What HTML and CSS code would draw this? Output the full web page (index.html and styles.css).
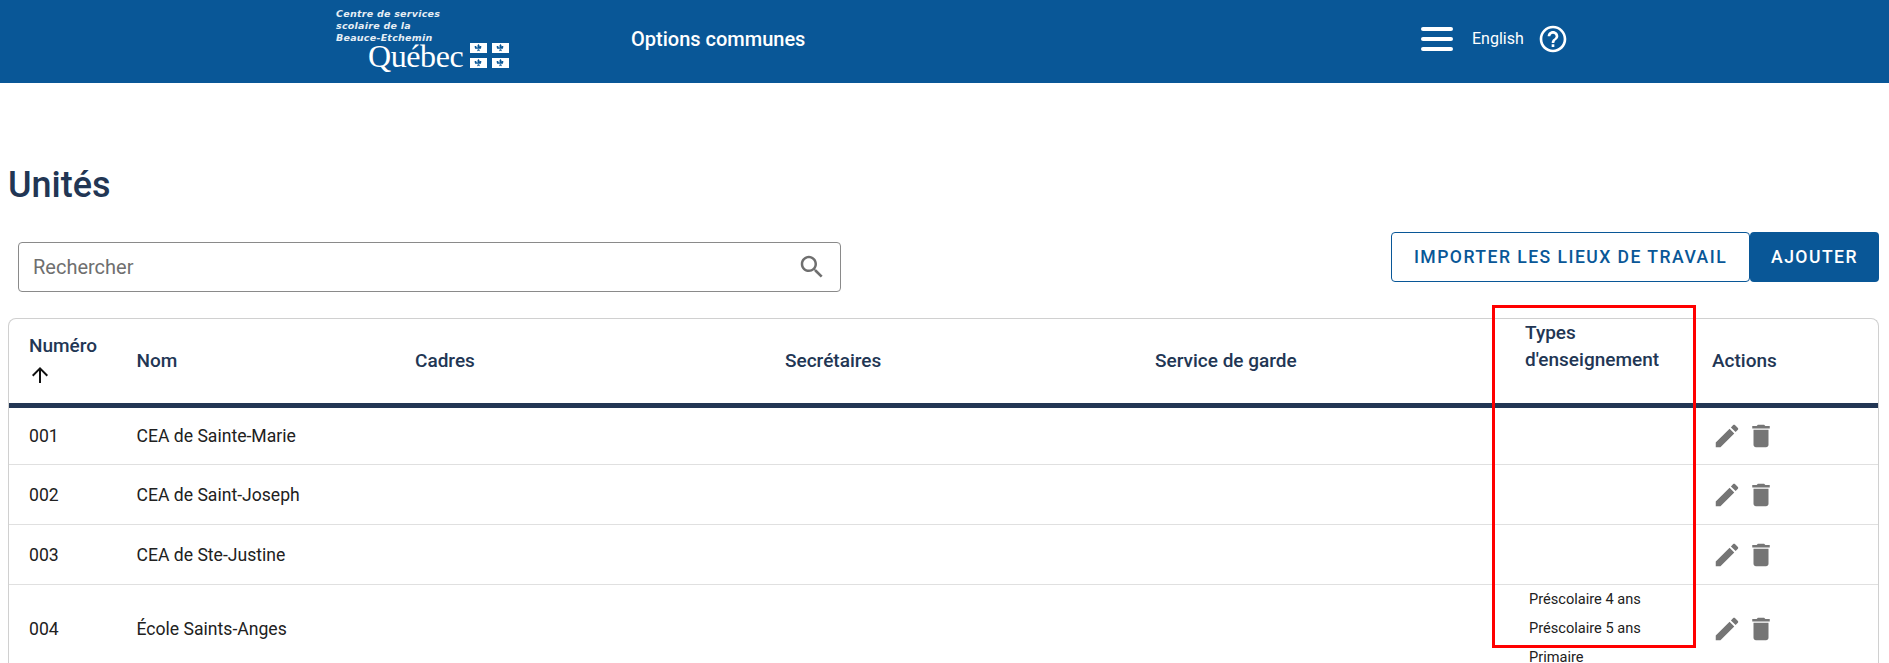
FILE: index.html
```html
<!DOCTYPE html>
<html lang="fr">
<head>
<meta charset="utf-8">
<title>Unités</title>
<link rel="stylesheet" href="styles.css">
</head>
<body>
<svg class="defs" width="0" height="0" aria-hidden="true">
  <symbol id="fleur" viewBox="0 0 17 10">
    <rect width="17" height="10" fill="#fff"/>
    <path d="M8.500 1c.9.800 1.300 1.700.8 3.400h-1.600C7.200 2.700 7.600 1.800 8.500 1zM6.700 4.400c-.1-1.200-1.200-1.700-1.900-1.100-.5.500-.3 1.300.4 1.400-.5.500-.1 1.200.6 1h4.400c.7.200 1.100-.5.600-1 .7-.1.900-.9.400-1.400-.7-.6-1.800-.1-1.900 1.100H6.700zM7.800 6.200h1.400l.6 1.800c-.4.300-.9.100-1.300-.4-.4.500-.9.700-1.300.4l.6-1.800z" fill="#095797"/>
  </symbol>
  <symbol id="pencil" viewBox="0 0 24 24"><path d="M3 17.250V21h3.750L17.810 9.940l-3.750-3.750L3 17.250zM20.710 7.040c.390-.390.390-1.020 0-1.410l-2.340-2.340c-.390-.390-1.020-.390-1.410 0l-1.830 1.830 3.750 3.750 1.830-1.830z"/></symbol>
  <symbol id="trash" viewBox="0 0 24 24"><path d="M6 19c0 1.100.900 2 2 2h8c1.100 0 2-.900 2-2V7H6v12zM19 4h-3.500l-1-1h-5l-1 1H5v2h14V4z"/></symbol>
  <symbol id="arrow" viewBox="0 0 24 24"><path d="M4 12l1.410 1.410L11 7.830V20h2V7.830l5.580 5.590L20 12l-8-8-8 8z"/></symbol>
</svg>

<header class="topbar">
  <div class="logo">
    <div class="logo-org">Centre de services<br>scolaire de la<br>Beauce-Etchemin</div>
    <div class="logo-row">
      <span class="logo-name">Québec</span>
      <span class="flag">
        <svg><use href="#fleur"/></svg><svg><use href="#fleur"/></svg><svg><use href="#fleur"/></svg><svg><use href="#fleur"/></svg>
      </span>
    </div>
  </div>
  <div class="app-name">Options communes</div>
  <div class="top-actions">
    <div class="burger"><span></span><span></span><span></span></div>
    <span class="lang">English</span>
    <svg class="help" viewBox="0 0 24 24"><path d="M11 18h2v-2h-2v2zm1-16C6.480 2 2 6.480 2 12s4.480 10 10 10 10-4.480 10-10S17.520 2 12 2zm0 18c-4.410 0-8-3.590-8-8s3.590-8 8-8 8 3.590 8 8-3.590 8-8 8zm0-14c-2.210 0-4 1.790-4 4h2c0-1.100.900-2 2-2s2 .900 2 2c0 2-3 1.750-3 5h2c0-2.250 3-2.500 3-5 0-2.210-1.790-4-4-4z"/></svg>
  </div>
</header>

<main class="content">
  <h1 class="title">Unités</h1>
  <div class="toolbar">
    <div class="search">
      <span class="search-text">Rechercher</span>
      <svg class="search-icon" viewBox="0 0 24 24"><path d="M15.500 14h-.790l-.280-.270C15.410 12.590 16 11.110 16 9.500 16 5.910 13.090 3 9.500 3S3 5.910 3 9.500 5.910 16 9.500 16c1.610 0 3.090-.590 4.230-1.570l.270.280v.790l5 4.990L20.490 19l-4.990-5zm-6 0C7.010 14 5 11.990 5 9.500S7.010 5 9.500 5 14 7.010 14 9.500 11.990 14 9.500 14z"/></svg>
    </div>
    <div class="buttons">
      <button class="btn btn-outline">IMPORTER LES LIEUX DE TRAVAIL</button>
      <button class="btn btn-solid">AJOUTER</button>
    </div>
  </div>

  <div class="card">
    <table class="units">
      <colgroup>
        <col class="c-num"><col class="c-name"><col class="c-wide"><col class="c-wide"><col class="c-wide"><col class="c-types"><col class="c-act">
      </colgroup>
      <thead>
        <tr>
          <th>Numéro<svg class="sort"><use href="#arrow"/></svg></th>
          <th>Nom</th>
          <th>Cadres</th>
          <th>Secrétaires</th>
          <th>Service de garde</th>
          <th>Types d'enseignement<svg class="sort sort-hidden"><use href="#arrow"/></svg></th>
          <th>Actions</th>
        </tr>
      </thead>
      <tbody>
        <tr class="row-first">
          <td>001</td><td>CEA de Sainte-Marie</td><td></td><td></td><td></td><td></td>
          <td class="acts"><svg class="act"><use href="#pencil"/></svg><svg class="act"><use href="#trash"/></svg></td>
        </tr>
        <tr class="row">
          <td>002</td><td>CEA de Saint-Joseph</td><td></td><td></td><td></td><td></td>
          <td class="acts"><svg class="act"><use href="#pencil"/></svg><svg class="act"><use href="#trash"/></svg></td>
        </tr>
        <tr class="row">
          <td>003</td><td>CEA de Ste-Justine</td><td></td><td></td><td></td><td></td>
          <td class="acts"><svg class="act"><use href="#pencil"/></svg><svg class="act"><use href="#trash"/></svg></td>
        </tr>
        <tr class="row-tall">
          <td>004</td><td>École Saints-Anges</td><td></td><td></td><td></td>
          <td class="types"><div>Préscolaire 4 ans</div><div>Préscolaire 5 ans</div><div>Primaire</div></td>
          <td class="acts"><svg class="act"><use href="#pencil"/></svg><svg class="act"><use href="#trash"/></svg></td>
        </tr>
      </tbody>
    </table>
  </div>
</main>
<div class="highlight"></div>
</body>
</html>
```

FILE: styles.css
```css
* { box-sizing: border-box; }
html, body { margin: 0; height: 100%; overflow: hidden; background: #fff; }
body { font-family: Roboto, "Liberation Sans", sans-serif; color: #223654; position: relative; }
.defs { position: absolute; }

.topbar { height: 83px; background: #095797; color: #fff; display: flex; align-items: center; padding: 0 320px 6px 336px; }
.logo { width: 295px; height: 83px; padding-top: 8px; flex: none; align-self: flex-start; }
.logo-org { font-family: "DejaVu Sans", sans-serif; font-weight: 700; font-style: italic; font-size: 9.500px; line-height: 12px; color: #e6eef5; letter-spacing: .25px; }
.logo-row { display: flex; align-items: center; margin: -9px 0 0 32px; }
.logo-name { font-family: "Liberation Serif", serif; font-size: 32px; line-height: 34px; letter-spacing: -.4px; width: 102px; margin-top: 4px; }
.flag { display: grid; grid-template-columns: 17px 17px; grid-template-rows: 10px 10px; column-gap: 5px; row-gap: 5px; margin-top: 2px; }
.flag svg { width: 17px; height: 10px; display: block; }
.app-name { font-size: 20px; font-weight: 500; white-space: nowrap; }
.top-actions { margin-left: auto; display: flex; align-items: center; }
.burger { width: 32px; display: flex; flex-direction: column; gap: 6px; }
.burger span { height: 4px; background: #fff; border-radius: 2px; }
.lang { font-size: 16px; font-weight: 400; margin-left: 19px; width: 65px; }
.help { width: 32px; height: 32px; fill: #fff; display: block; }

.content { padding: 0 10px 0 8px; }
.title { margin: 0; height: 149px; padding-top: 77px; font-size: 36px; line-height: 50px; font-weight: 500; color: #223654; }
.toolbar { display: flex; align-items: flex-start; justify-content: space-between; padding-left: 10px; height: 86px; }
.search { width: 823px; height: 50px; margin-top: 10px; border: 1px solid #8a8a8a; border-radius: 4px; display: flex; align-items: center; justify-content: space-between; padding: 0 13px 0 14px; }
.search-text { font-size: 20px; color: #6f6f6f; }
.search-icon { width: 30px; height: 30px; fill: #6f6f6f; }
.buttons { display: flex; }
.btn { height: 50px; font-family: Roboto, sans-serif; font-size: 17.600px; font-weight: 500; letter-spacing: 1.450px; border-radius: 4px; }
.btn-outline { width: 359px; background: #fff; color: #095797; border: 1px solid #095797; padding: 0; }
.btn-solid { width: 129px; background: #095797; color: #fff; border: 0; padding: 0; }

.card { border: 1px solid #d0d0d0; border-bottom: 0; border-radius: 8px 8px 0 0; height: 345px; overflow: hidden; }
.units { width: 100%; border-collapse: collapse; table-layout: fixed; }
.c-num { width: 107.500px; }
.c-name { width: 278.500px; }
.c-wide { width: 370px; }
.c-types { width: 187px; }
.c-act { width: auto; }
th { height: 84px; border-bottom: 5px solid #223654; text-align: left; font-size: 19px; line-height: 27px; font-weight: 500; color: #223654; vertical-align: middle; padding-top: 0; padding-bottom: 2px; }
th, td { padding-left: 20px; padding-right: 20px; }
td { font-size: 17.600px; line-height: 24px; color: #212121; padding-top: 0; padding-bottom: 0; vertical-align: middle; }
.sort { display: block; width: 24px; height: 30px; padding: 4px 0 2px; fill: #111; margin-left: -1px; }
.sort-hidden { visibility: hidden; height: 28px; padding: 0; }
.row-first { height: 59px; border-bottom: 1px solid #e0e0e0; }
.row { height: 60px; border-bottom: 1px solid #e0e0e0; }
.row-tall { height: 87px; }
.types { font-size: 14.600px; line-height: 29px; padding-left: 24px; padding-right: 0; }
.acts { padding-left: 20px; padding-right: 0; white-space: nowrap; }
.act { width: 30px; height: 30px; fill: #757575; vertical-align: middle; margin-right: 4px; }

.highlight { position: absolute; left: 1492px; top: 305px; width: 204px; height: 343px; border: 3px solid #f00; pointer-events: none; }
```
